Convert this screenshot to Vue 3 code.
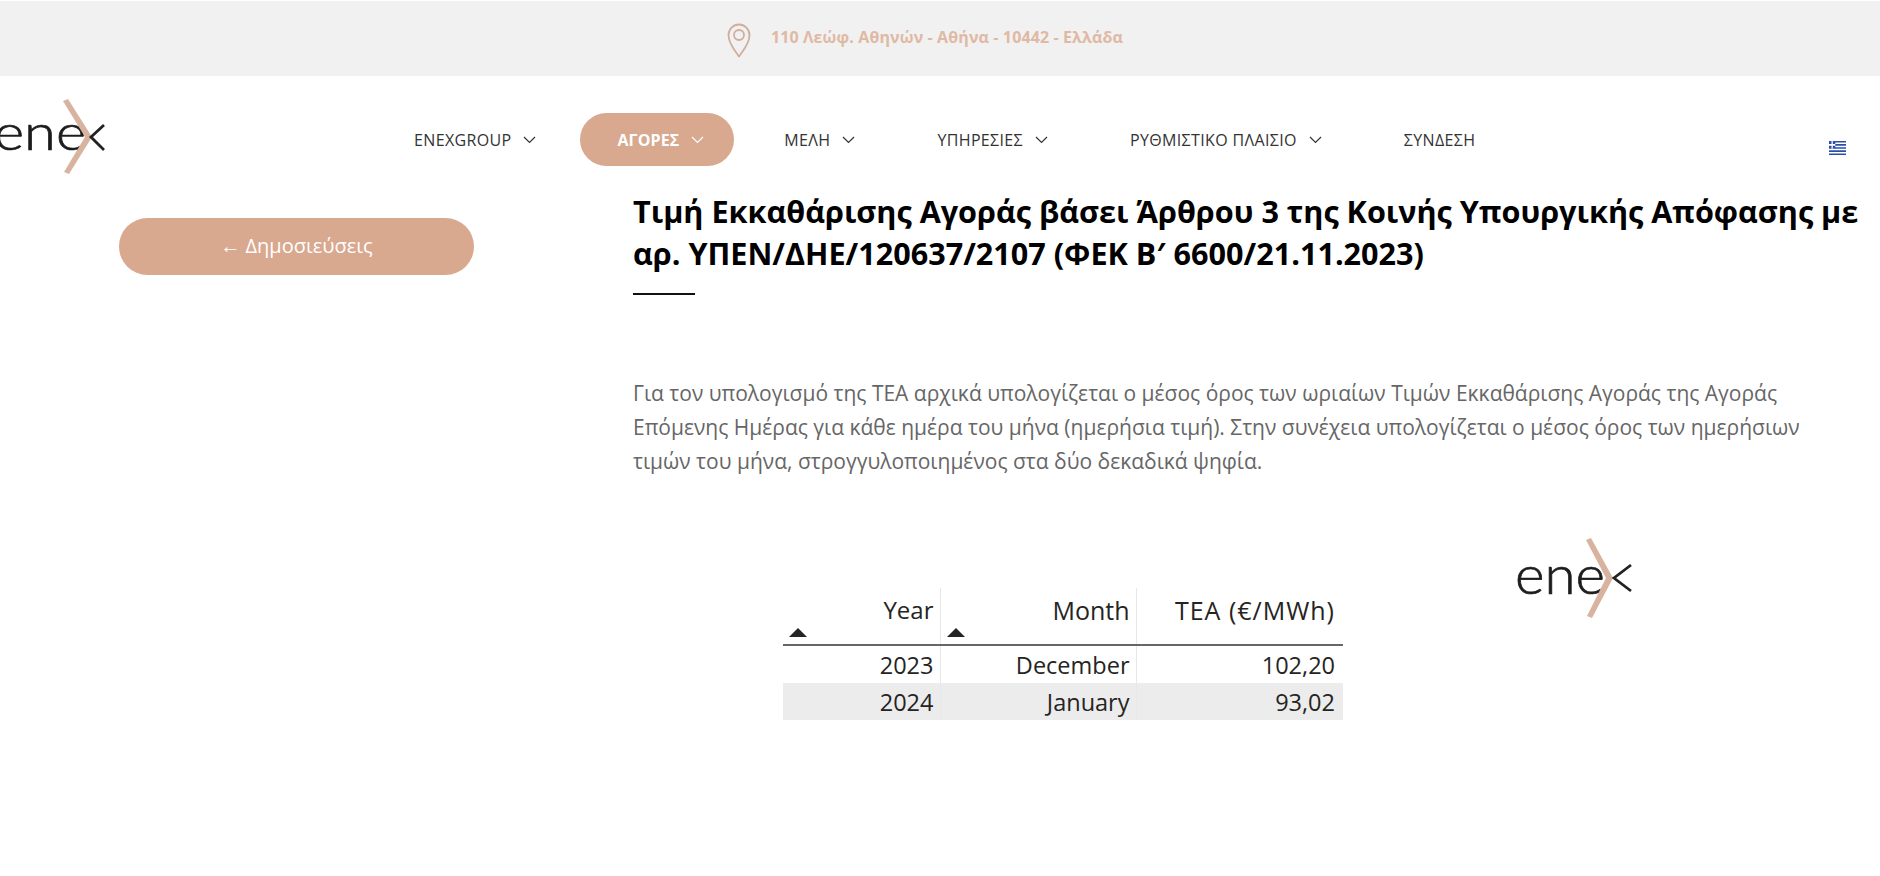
<template>
  <div class="page">
    <div class="topbar">
      <svg class="pin" viewBox="0 0 24 35" width="24" height="35" fill="none" stroke="#d0ae9b" stroke-width="1.800">
        <path d="M12 33.500C8 27.500 1.500 21 1.500 12A10.500 10.500 0 0 1 22.500 12C22.500 21 16 27.500 12 33.500Z" stroke-linejoin="round" />
        <circle cx="12" cy="12" r="5" />
      </svg>
      <span class="address">110 Λεώφ. Αθηνών - Αθήνα - 10442 - Ελλάδα</span>
    </div>

    <header class="header">
      <svg class="logo logo-top" viewBox="0 0 110 82" width="110" height="82">
        <text x="-6" y="52" textLength="92" lengthAdjust="spacingAndGlyphs" class="logo-word">ene</text>
        <polygon points="63,3 68,1 92,39 69,76 64,74 85,39" fill="#d8b3a0" />
        <path d="M104 27 91 39 104 52" fill="none" stroke="#222" stroke-width="2.800" />
      </svg>

      <nav class="nav">
        <a v-for="item in menu" :key="item.label" class="nav-item" :class="{ active: item.active }">
          {{ item.label }}
          <svg v-if="item.arrow" viewBox="0 0 13 8" width="13" height="8" fill="none" stroke="currentColor" stroke-width="1.200">
            <path d="M1 1 6.500 6.500 12 1" />
          </svg>
        </a>
      </nav>

      <svg class="flag" viewBox="0 0 27 18" width="17" height="14" preserveAspectRatio="none">
        <rect width="27" height="18" fill="#2b4fa8" />
        <path d="M10 3h17M10 7h17M0 11h27M0 15h27" stroke="#fff" stroke-width="2" />
        <path d="M5 0v10M0 5h10" stroke="#fff" stroke-width="2" />
      </svg>
    </header>

    <main class="content">
      <aside class="side">
        <a class="back-btn">← Δημοσιεύσεις</a>
      </aside>

      <section class="article">
        <h1>Τιμή Εκκαθάρισης Αγοράς βάσει Άρθρου 3 της Κοινής Υπουργικής Απόφασης με αρ. ΥΠΕΝ/ΔΗΕ/120637/2107 (ΦΕΚ Β′ 6600/21.11.2023)</h1>
        <div class="rule"></div>
        <p class="intro">
          Για τον υπολογισμό της ΤΕΑ αρχικά υπολογίζεται ο μέσος όρος των ωριαίων Τιμών Εκκαθάρισης Αγοράς της Αγοράς Επόμενης Ημέρας για κάθε ημέρα του μήνα (ημερήσια τιμή). Στην συνέχεια υπολογίζεται ο μέσος όρος των ημερήσιων τιμών του μήνα, στρογγυλοποιημένος στα δύο δεκαδικά ψηφία.
        </p>

        <div class="report">
          <table class="tea">
            <thead>
              <tr>
                <th class="col-year"><i class="sort"></i>Year</th>
                <th class="col-month"><i class="sort"></i>Month</th>
                <th class="col-tea">TEA (€/MWh)</th>
              </tr>
            </thead>
            <tbody>
              <tr v-for="row in rows" :key="row.year">
                <td>{{ row.year }}</td>
                <td>{{ row.month }}</td>
                <td>{{ row.tea }}</td>
              </tr>
            </tbody>
          </table>

          <svg class="logo logo-report" viewBox="0 0 118 84" width="118" height="84">
            <text x="0" y="58" textLength="90" lengthAdjust="spacingAndGlyphs" class="logo-word report-word">ene</text>
            <polygon points="71,4 76,2 98,42 77,82 72,80 91,42" fill="#d8b3a0" />
            <path d="M116 29 99 42 116 55" fill="none" stroke="#222" stroke-width="2.800" />
          </svg>
        </div>
      </section>
    </main>
  </div>
</template>

<script setup>
const menu = [
  { label: "ENEXGROUP", arrow: true },
  { label: "ΑΓΟΡΕΣ", arrow: true, active: true },
  { label: "ΜΕΛΗ", arrow: true },
  { label: "ΥΠΗΡΕΣΙΕΣ", arrow: true },
  { label: "ΡΥΘΜΙΣΤΙΚΟ ΠΛΑΙΣΙΟ", arrow: true },
  { label: "ΣΥΝΔΕΣΗ" },
];

const rows = [
  { year: 2023, month: "December", tea: "102,20" },
  { year: 2024, month: "January", tea: "93,02" },
];
</script>

<style>
html,
body {
  background: #fff;
}
</style>

<style scoped>
.page {
  height: 876px;
  overflow: hidden;
  font-family: "Open Sans", sans-serif;
  color: #222;
}

.topbar {
  margin-top: 1px;
  height: 75px;
  background: #f1f1f1;
  display: flex;
  align-items: center;
  padding-left: 727px;
  gap: 20px;
}

.pin {
  margin-top: 3px;
}

.address {
  font-size: 16px;
  font-weight: 700;
  letter-spacing: 0.12px;
  color: #e0b9a4;
  margin-top: -3px;
}

.header {
  height: 104px;
  display: flex;
  position: relative;
}

.logo-top {
  flex: none;
  margin-top: 22px;
}

.logo-word {
  font-family: Lato, sans-serif;
  font-weight: 300;
  font-size: 50px;
  fill: #1c1c1c;
  stroke: #1c1c1c;
  stroke-width: 0.7px;
}

.nav {
  display: flex;
  align-items: center;
  height: 53px;
  margin-top: 37px;
  margin-left: 263px;
}

.nav-item {
  display: flex;
  align-items: center;
  gap: 12px;
  height: 53px;
  padding: 0 41px;
  font-size: 16px;
  font-weight: 500;
  letter-spacing: 0.35px;
  color: #333;
  flex: none;
}

.nav-item.active {
  background: #d8a88f;
  border-radius: 27px;
  color: #fff;
  font-weight: 700;
  letter-spacing: 0.1px;
  margin: 0 9px 0 3px;
  padding: 0 30px 0 37px;
}

.flag {
  position: absolute;
  left: 1829px;
  top: 65px;
}

.content {
  display: flex;
  align-items: flex-start;
}

.side {
  width: 633px;
  flex: none;
  padding: 38px 0 0 119px;
  box-sizing: border-box;
}

.back-btn {
  display: flex;
  align-items: center;
  justify-content: center;
  width: 355px;
  height: 57px;
  padding-bottom: 2px;
  box-sizing: border-box;
  border-radius: 29px;
  background: #d8a88f;
  color: #fff;
  font-size: 20px;
}

.article {
  width: 1235px;
  flex: none;
}

h1 {
  margin: 10px 0 0;
  font-size: 30.600px;
  line-height: 42px;
  font-weight: 700;
  color: #000;
}

.rule {
  width: 62px;
  height: 2px;
  background: #111;
  margin-top: 19px;
}

.intro {
  margin: 81px 0 0;
  font-size: 21px;
  line-height: 34px;
  color: #666;
  width: 1190px;
}

.report {
  display: flex;
  align-items: flex-start;
  margin-top: 53px;
  padding-left: 150px;
}

.tea {
  border-collapse: collapse;
  width: 560px;
  table-layout: fixed;
  font-size: 23.500px;
  color: #252423;
  margin-top: 57px;
}

.tea th {
  position: relative;
  font-weight: 400;
  font-size: 25px;
  text-align: right;
  vertical-align: top;
  height: 57px;
  padding: 5px 6px 0 0;
  box-sizing: border-box;
  border-bottom: 2px solid #666;
  border-right: 1px solid #e8e8e8;
  line-height: 34px;
}

.tea th.col-year {
  font-size: 24px;
}

.tea th.col-tea {
  letter-spacing: 1px;
  padding-right: 8px;
}

.tea td {
  text-align: right;
  height: 37px;
  padding: 0 6px 0 0;
  box-sizing: border-box;
  border-right: 1px solid #e8e8e8;
  line-height: 34px;
}

.tea tbody tr:first-child td {
  height: 38px;
}

.tea td:last-child {
  padding-right: 8px;
}

.tea th:last-child,
.tea td:last-child {
  border-right: none;
}

.tea tbody tr:nth-child(2) {
  background: #edecec;
}

.col-year {
  width: 157px;
}

.col-month {
  width: 196px;
}

.sort {
  position: absolute;
  left: 6px;
  bottom: 7px;
  border-left: 9px solid transparent;
  border-right: 9px solid transparent;
  border-bottom: 9px solid #252423;
}

.logo-report {
  flex: none;
  margin-left: 172px;
  margin-top: 5px;
}

.report-word {
  font-size: 54px;
}
</style>
